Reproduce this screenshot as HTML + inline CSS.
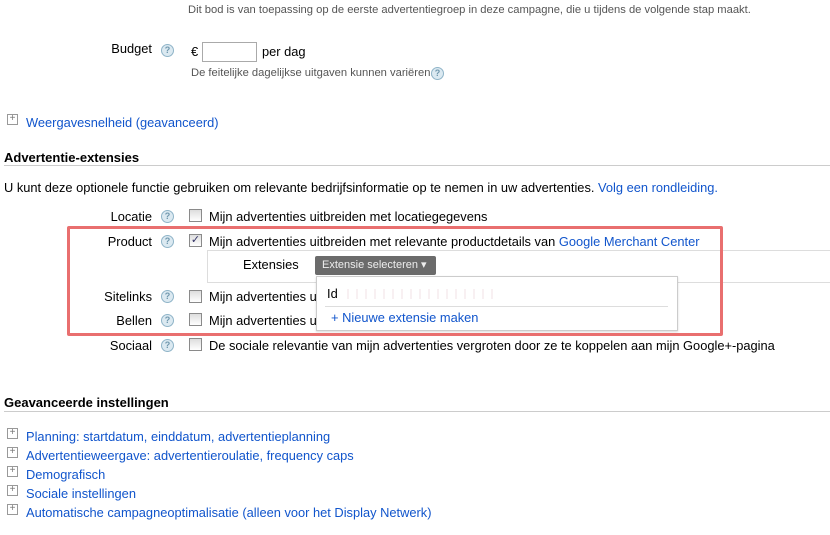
<!DOCTYPE html>
<html><head><style>
body{margin:0;width:830px;height:535px;background:#fff;font-family:"Liberation Sans",Arial,sans-serif;font-size:12.85px;color:#000;position:relative;overflow:hidden}
.a{position:absolute;white-space:nowrap}
.s{font-size:11.2px;color:#555}
.l{color:#1155cc}
.q{position:absolute;width:11px;height:11px;border:1px solid #8fb4c8;border-radius:50%;background:#dbe9f1;color:#6f97ad;font-size:9px;line-height:11px;text-align:center;font-weight:bold}
.cb{position:absolute;width:11px;height:11px;border:1px solid #8a8a8a;background:linear-gradient(#ddd,#fff)}
.pl{position:absolute;width:9px;height:9px;border:1px solid #999;font-size:10px;line-height:8px;text-align:center;color:#777}
.r{text-align:right;width:100px}
.h{font-weight:bold;font-size:13px}
.hr{position:absolute;left:4px;right:0;height:1px;background:#ccc}
</style></head><body>
<div class="a s" style="left:188px;top:4px">Dit bod is van toepassing op de eerste advertentiegroep in deze campagne, die u tijdens de volgende stap maakt.</div>
<div class="a r" style="left:52px;top:41px">Budget</div><div class="q" style="left:161px;top:44px">?</div>
<div class="a" style="left:191px;top:44px">€</div>
<div class="a" style="left:202px;top:42px;width:53px;height:18px;border:1px solid #aaa"></div>
<div class="a" style="left:262px;top:44px">per dag</div>
<div class="a s" style="left:191px;top:67px">De feitelijke dagelijkse uitgaven kunnen variëren.</div><div class="q" style="left:431px;top:67px">?</div>
<div class="pl" style="left:7px;top:114px">+</div><div class="a l" style="left:26px;top:115px">Weergavesnelheid (geavanceerd)</div>
<div class="a h" style="left:4px;top:150px">Advertentie-extensies</div><div class="hr" style="top:165px"></div>
<div class="a" style="left:4px;top:180px">U kunt deze optionele functie gebruiken om relevante bedrijfsinformatie op te nemen in uw advertenties. <span class="l">Volg een rondleiding.</span></div>
<div class="a r" style="left:52px;top:209px">Locatie</div><div class="q" style="left:161px;top:210px">?</div><div class="cb" style="left:189px;top:209px"></div><div class="a" style="left:209px;top:209px">Mijn advertenties uitbreiden met locatiegegevens</div>
<div class="a r" style="left:52px;top:234px">Product</div><div class="q" style="left:161px;top:235px">?</div><div class="cb" style="left:189px;top:234px;color:#336;font-size:11px;line-height:11px;text-align:center">✓</div><div class="a" style="left:209px;top:234px">Mijn advertenties uitbreiden met relevante productdetails van <span class="l">Google Merchant Center</span></div>
<div class="a" style="left:207px;top:250px;width:630px;height:31px;border:1px solid #ddd"></div>
<div class="a" style="left:243px;top:257px">Extensies</div>
<div class="a" style="left:315px;top:256px;width:121px;height:19px;background:#6b6b6b;border-radius:2px;color:#eee;font-size:11px;line-height:19px;padding-left:7px;box-sizing:border-box">Extensie selecteren ▾</div>
<div class="a r" style="left:52px;top:289px">Sitelinks</div><div class="q" style="left:161px;top:290px">?</div><div class="cb" style="left:189px;top:290px"></div><div class="a" style="left:209px;top:289px">Mijn advertenties u</div>
<div class="a r" style="left:52px;top:313px">Bellen</div><div class="q" style="left:161px;top:314px">?</div><div class="cb" style="left:189px;top:313px"></div><div class="a" style="left:209px;top:313px">Mijn advertenties u</div>
<div class="a" style="left:316px;top:276px;width:360px;height:53px;border:1px solid #ccc;background:#fff;box-shadow:0 1px 2px rgba(0,0,0,.15)"></div>
<div class="a" style="left:327px;top:286px">Id</div>
<div class="a" style="left:340px;top:289px;width:160px;height:10px;background:repeating-linear-gradient(90deg,#fff 0 7px,#f3e6ea 7px 9px);opacity:.6"></div>
<div class="a" style="left:325px;top:306px;width:343px;height:1px;background:#ddd"></div>
<div class="a l" style="left:331px;top:310px">+ Nieuwe extensie maken</div>
<div class="a" style="left:67px;top:226px;width:650px;height:104px;border:3px solid #e96f6f;border-radius:2px"></div>
<div class="a r" style="left:52px;top:338px">Sociaal</div><div class="q" style="left:161px;top:339px">?</div><div class="cb" style="left:189px;top:338px"></div><div class="a" style="left:209px;top:338px">De sociale relevantie van mijn advertenties vergroten door ze te koppelen aan mijn Google+-pagina</div>
<div class="a h" style="left:4px;top:395px">Geavanceerde instellingen</div><div class="hr" style="top:411px"></div>
<div class="pl" style="left:7px;top:428px">+</div><div class="a l" style="left:26px;top:429px">Planning: startdatum, einddatum, advertentieplanning</div>
<div class="pl" style="left:7px;top:447px">+</div><div class="a l" style="left:26px;top:448px">Advertentieweergave: advertentieroulatie, frequency caps</div>
<div class="pl" style="left:7px;top:466px">+</div><div class="a l" style="left:26px;top:467px">Demografisch</div>
<div class="pl" style="left:7px;top:485px">+</div><div class="a l" style="left:26px;top:486px">Sociale instellingen</div>
<div class="pl" style="left:7px;top:504px">+</div><div class="a l" style="left:26px;top:505px">Automatische campagneoptimalisatie (alleen voor het Display Netwerk)</div>
</body></html>
